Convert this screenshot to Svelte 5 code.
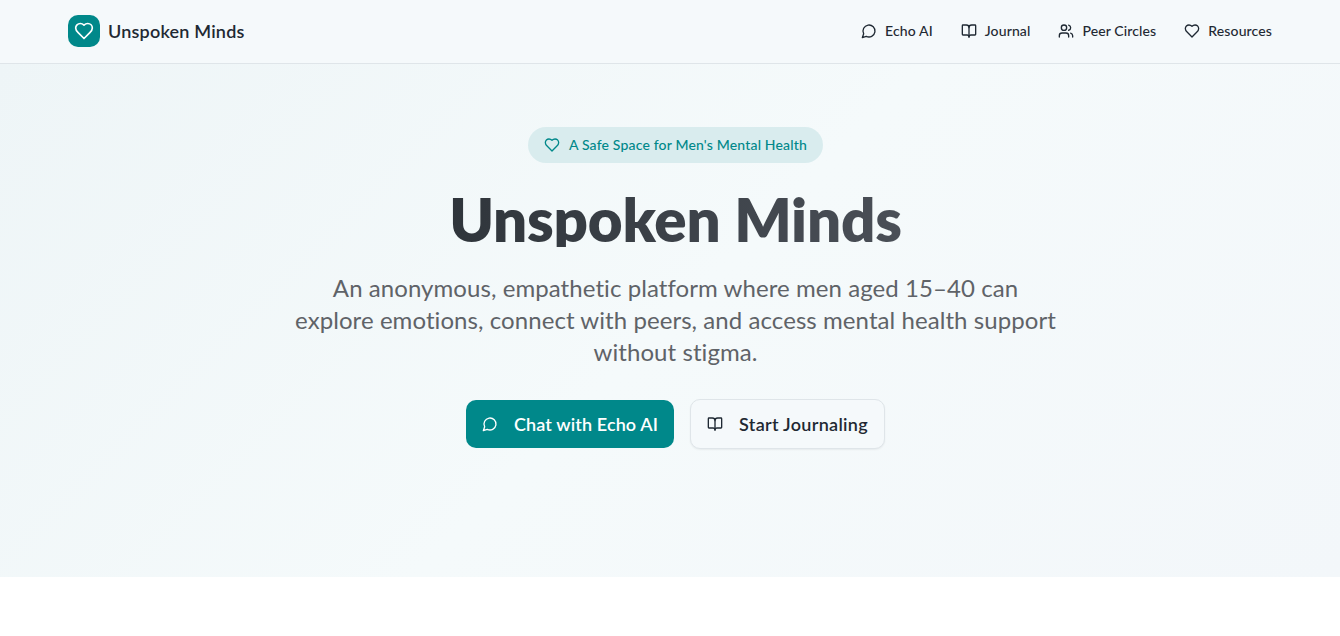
<script>
  const navLinks = [
    { label: 'Echo AI', icon: 'chat' },
    { label: 'Journal', icon: 'book' },
    { label: 'Peer Circles', icon: 'users' },
    { label: 'Resources', icon: 'heart' }
  ];
</script>

{#snippet icon(name, size)}
  <svg width={size} height={size} viewBox="0 0 24 24" fill="none" stroke="currentColor" stroke-width="2" stroke-linecap="round" stroke-linejoin="round" aria-hidden="true">
    {#if name === 'chat'}
      <path d="M7.9 20A9 9 0 1 0 4 16.1L2 22Z" />
    {:else if name === 'book'}
      <path d="M12 7v14" />
      <path d="M3 18a1 1 0 0 1-1-1V4a1 1 0 0 1 1-1h5a4 4 0 0 1 4 4 4 4 0 0 1 4-4h5a1 1 0 0 1 1 1v13a1 1 0 0 1-1 1h-6a3 3 0 0 0-3 3 3 3 0 0 0-3-3z" />
    {:else if name === 'users'}
      <path d="M16 21v-2a4 4 0 0 0-4-4H6a4 4 0 0 0-4 4v2" />
      <circle cx="9" cy="7" r="4" />
      <path d="M22 21v-2a4 4 0 0 0-3-3.87" />
      <path d="M16 3.13a4 4 0 0 1 0 7.75" />
    {:else}
      <path d="M19 14c1.49-1.46 3-3.21 3-5.5A5.5 5.5 0 0 0 16.5 3c-1.76 0-3 .5-4.5 2-1.5-1.5-2.74-2-4.5-2A5.5 5.5 0 0 0 2 8.5c0 2.3 1.5 4.05 3 5.5l7 7Z" />
    {/if}
  </svg>
{/snippet}

<header class="topbar">
  <a class="brand" href="#home">
    <span class="brand-mark">{@render icon('heart', 20)}</span>
    <span class="brand-name">Unspoken Minds</span>
  </a>
  <nav class="nav">
    {#each navLinks as link}
      <a class="nav-link" href="#home">
        {@render icon(link.icon, 16)}
        <span>{link.label}</span>
      </a>
    {/each}
  </nav>
</header>

<main>
  <section class="hero">
    <div class="badge">
      {@render icon('heart', 16)}
      <span>A Safe Space for Men's Mental Health</span>
    </div>
    <h1>Unspoken Minds</h1>
    <p class="lead">An anonymous, empathetic platform where men aged 15–40 can explore emotions, connect with peers, and access mental health support without stigma.</p>
    <div class="actions">
      <a class="btn primary" href="#home">
        {@render icon('chat', 16)}
        <span>Chat with Echo AI</span>
      </a>
      <a class="btn secondary" href="#home">
        {@render icon('book', 16)}
        <span>Start Journaling</span>
      </a>
    </div>
  </section>
</main>

<style>
  :global(body) {
    background: #fff;
    font-family: Lato, "Noto Sans", sans-serif;
    color: #1f2933;
  }

  a {
    color: inherit;
    text-decoration: none;
  }

  .topbar {
    height: 64px;
    box-sizing: border-box;
    padding: 0 68px 1px;
    display: flex;
    align-items: center;
    justify-content: space-between;
    background: #f5f9fb;
    border-bottom: 1px solid #dfe5e9;
  }

  .brand {
    display: flex;
    align-items: center;
    gap: 8px;
  }

  .brand-mark {
    width: 32px;
    height: 32px;
    border-radius: 10px;
    background: #00888a;
    color: #fff;
    display: flex;
    align-items: center;
    justify-content: center;
  }

  .brand-name {
    font-size: 18px;
    font-weight: 600;
    letter-spacing: 0.2px;
    color: #1f2933;
  }

  .nav {
    display: flex;
    gap: 28px;
  }

  .nav-link {
    display: flex;
    align-items: center;
    gap: 8px;
    font-size: 14px;
    font-weight: 500;
    letter-spacing: 0.12px;
    color: #1f2933;
  }

  .nav-link span,
  .badge span {
    margin-bottom: 2px;
  }

  .hero {
    height: 513px;
    box-sizing: border-box;
    padding: 63px 0 0 11px;
    display: flex;
    flex-direction: column;
    align-items: center;
    background: linear-gradient(135deg, #eef5f7 0%, #f5fafb 50%, #f3f7fa 100%);
  }

  .badge {
    height: 36px;
    box-sizing: border-box;
    padding: 0 16px;
    display: flex;
    align-items: center;
    gap: 9px;
    border-radius: 18px;
    background: #d9ecee;
    color: #00888a;
    font-size: 14px;
    font-weight: 500;
    letter-spacing: 0.17px;
  }

  h1 {
    margin: 28px 0 0;
    font-size: 60px;
    line-height: 56px;
    font-weight: 800;
    letter-spacing: -0.2px;
    background: linear-gradient(90deg, #2f353b, #4a4f57);
    background-clip: text;
    -webkit-background-clip: text;
    color: transparent;
  }

  .lead {
    width: 768px;
    margin: 25px 0 0;
    text-align: center;
    font-size: 24px;
    line-height: 32px;
    letter-spacing: 0.07px;
    color: #5f6368;
  }

  .actions {
    display: flex;
    gap: 16px;
    margin-top: 32px;
  }

  .btn {
    height: 48px;
    box-sizing: border-box;
    padding: 0 16px;
    display: flex;
    align-items: center;
    gap: 16px;
    border-radius: 10px;
    font-size: 18px;
    font-weight: 600;
    letter-spacing: 0.12px;
  }

  .primary {
    background: #00888a;
    color: #fff;
  }

  .secondary {
    height: 50px;
    margin-top: -1px;
    background: #f5f9fb;
    border: 1px solid #dfe5e9;
    box-shadow: 0 1px 2px rgba(0, 0, 0, 0.06);
    letter-spacing: 0.3px;
    color: #1f2933;
  }
</style>
